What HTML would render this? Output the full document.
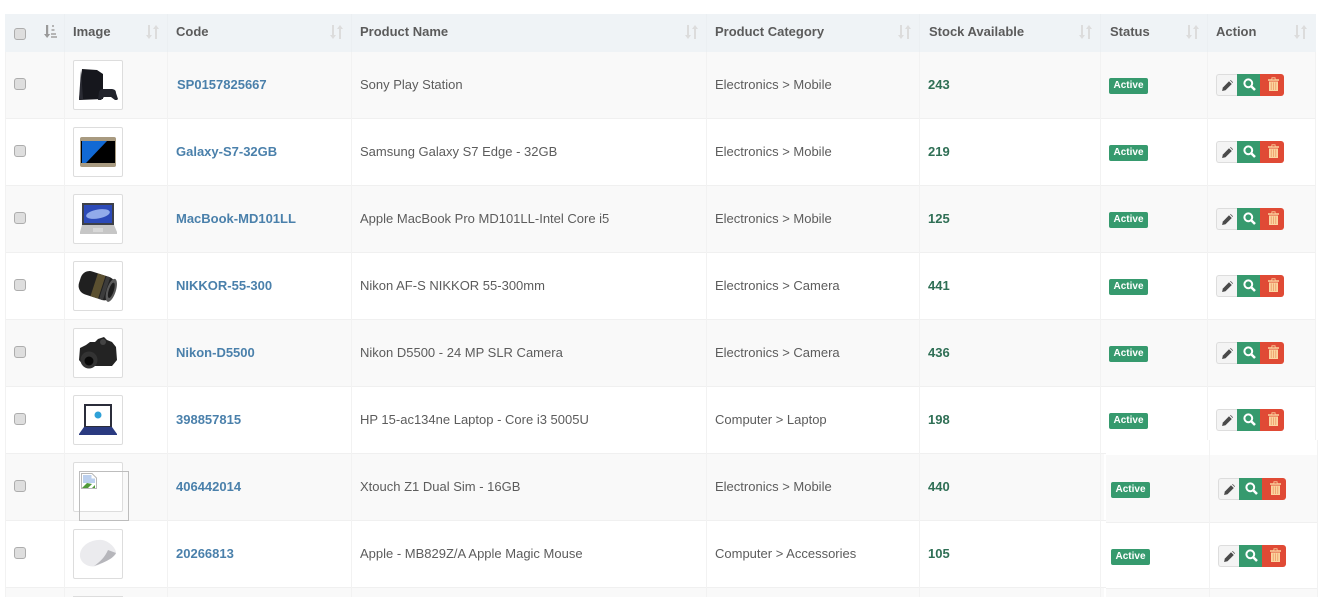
<!DOCTYPE html>
<html><head><meta charset="utf-8"><style>
html,body{margin:0;padding:0;background:#fff;width:1331px;height:597px;overflow:hidden}
body{position:relative;font:13px/22px "Liberation Sans",Arial,sans-serif;color:#555}
div,span,svg{position:absolute;display:block}
.head{left:5px;top:14px;width:1311px;height:38px;background:#eff3f6}
.st{left:5px;width:1311px;height:66px;background:#f9f9f9}
.hl{left:5px;width:1311px;height:1px;background:#f0f0f0}
.vl{top:52px;width:1px;height:545px;background:#f2f2f2}
.hv{top:14px;width:1px;height:38px;background:#ebeff2}
.h{top:21px;font-weight:700;color:#5b5b5b;white-space:nowrap}
.t{white-space:nowrap;color:#5c5c5c}
.c{font-weight:700;color:#4a80ab;white-space:nowrap}
.n{font-weight:700;color:#2f6f55;white-space:nowrap}
.cb{left:14px;width:10px;height:10px;border:1px solid #adadad;border-radius:3px;background:#dedede}
.th{left:73px;width:48px;height:48px;border:1px solid #ddd;border-radius:2px;background:#fff}
.b{width:39px;height:16px;background:#369a6e;border-radius:2px;color:#fff;font-size:10px;font-weight:700;line-height:16px;text-align:center}
.e{width:20px;height:20px;background:#f4f4f4;border:1px solid #ddd;border-right:0;border-radius:3px 0 0 3px}
.g{width:23px;height:22px;background:#369a6e}
.d{width:24px;height:22px;background:#e04a35;border-radius:0 3px 3px 0}
</style></head><body>
<svg width="0" height="0" style="left:0;top:0"><defs>
<symbol id="sort" viewBox="0 0 13 14"><path d="M2 0h2v10h2l-3 4-3-4h2zM9 14h2V4h2l-3-4-3 4h2z" fill="#dcdcdc"/></symbol>
<symbol id="pen" viewBox="0 0 11 11"><path d="M7 1.200l2.800 2.800-6.300 6.300-3.400.7.700-3.400z" fill="#4a4a4a"/><path d="M8 .4l.7-.4 2.300 2.300-.4.700z" fill="#555"/></symbol>
<symbol id="mag" viewBox="0 0 13 13"><circle cx="5.300" cy="5.300" r="3.900" fill="none" stroke="#fff" stroke-width="2"/><path d="M8.200 8.200l3.800 3.800" stroke="#fff" stroke-width="2.500"/></symbol>
<symbol id="tr" viewBox="0 0 11 14"><path d="M0 2.200h11v1.500H0zM3.500 2.400V.4h4v2" fill="#fbd5a0"/><path d="M4.300 1.200h2.400v1.200H4.300z" fill="#e04a35"/><path d="M1 4.500h9V14H1z" fill="#fbd5a0"/><path d="M3.200 5.400v7.600M5.500 5.400v7.600M7.800 5.400v7.600" stroke="#ec9360" stroke-width=".7"/></symbol>
</defs></svg>

<div class="head"></div>
<div class="st" style="top:52px"></div><div class="st" style="top:186px"></div><div class="st" style="top:320px"></div><div class="st" style="top:454px;width:1099px"></div><div class="st" style="top:588px;width:1099px;height:9px"></div>
<div class="hl" style="top:118px"></div><div class="hl" style="top:185px"></div><div class="hl" style="top:252px"></div><div class="hl" style="top:319px"></div><div class="hl" style="top:386px"></div><div class="hl" style="top:453px"></div><div class="hl" style="top:520px"></div><div class="hl" style="top:587px"></div>
<div class="vl" style="left:5px"></div><div class="vl" style="left:64px"></div><div class="vl" style="left:167px"></div><div class="vl" style="left:351px"></div><div class="vl" style="left:706px"></div><div class="vl" style="left:919px"></div><div class="vl" style="left:1100px"></div><div class="vl" style="left:1207px;height:388px"></div><div class="vl" style="left:1315px;height:388px"></div>
<div class="hv" style="left:64px"></div><div class="hv" style="left:167px"></div><div class="hv" style="left:351px"></div><div class="hv" style="left:706px"></div><div class="hv" style="left:919px"></div><div class="hv" style="left:1100px"></div><div class="hv" style="left:1207px"></div>

<div class="cb" style="top:28px"></div>
<svg style="left:44px;top:25px" width="13" height="13" viewBox="0 0 13 13"><path d="M2 0h2.200v9h2l-3.100 4L0 9h2z" fill="#9a9a9a"/><path d="M8 0h2v2H8zM7.500 4h3v2h-3zM7 8h5v2H7zM7 11h6v2H7z" fill="#b5b5b5"/></svg>
<div class="h" style="left:73px">Image</div><svg style="left:146px;top:25px" width="13" height="14"><use href="#sort"/></svg>
<div class="h" style="left:176px">Code</div><svg style="left:330px;top:25px" width="13" height="14"><use href="#sort"/></svg>
<div class="h" style="left:360px">Product Name</div><svg style="left:685px;top:25px" width="13" height="14"><use href="#sort"/></svg>
<div class="h" style="left:715px">Product Category</div><svg style="left:898px;top:25px" width="13" height="14"><use href="#sort"/></svg>
<div class="h" style="left:929px">Stock Available</div><svg style="left:1079px;top:25px" width="13" height="14"><use href="#sort"/></svg>
<div class="h" style="left:1110px">Status</div><svg style="left:1186px;top:25px" width="13" height="14"><use href="#sort"/></svg>
<div class="h" style="left:1216px">Action</div><svg style="left:1294px;top:25px" width="13" height="14"><use href="#sort"/></svg>

<div class="cb" style="top:78px"></div><div class="cb" style="top:145px"></div><div class="cb" style="top:212px"></div><div class="cb" style="top:279px"></div><div class="cb" style="top:346px"></div><div class="cb" style="top:413px"></div><div class="cb" style="top:480px"></div><div class="cb" style="top:547px"></div>

<div class="th" style="top:60px"><svg style="left:0;top:0" width="48" height="48" viewBox="0 0 48 48"><path d="M8 8l15 1 6 4v25L5 39z" fill="#16171d"/><path d="M7 9l2 29h-4z" fill="#2a2b33"/><path d="M25 31c1-3 3-3 5-3h7c3 0 5 1 5 4l2 6-1 1h-2l-4-3h-7l-3 3h-3z" fill="#22242c"/></svg></div>
<div class="th" style="top:127px"><svg style="left:0;top:0" width="48" height="48" viewBox="0 0 48 48"><rect x="6" y="9" width="36" height="30" rx="2" fill="#a89a80"/><rect x="7" y="13" width="34" height="22" fill="#000"/><path d="M8 13h25L12 35H8z" fill="#1169d4"/></svg></div>
<div class="th" style="top:194px"><svg style="left:0;top:0" width="48" height="48" viewBox="0 0 48 48"><path d="M8 8h32v22H8z" fill="#3d4048"/><path d="M10 10h28v18H10z" fill="#2c4ab8"/><ellipse cx="24" cy="19" rx="12" ry="4.500" fill="#92abea" transform="rotate(-10 24 19)"/><path d="M8 30h32l3 7v2H6v-2z" fill="#c6c6c6"/><path d="M19 33h10v4H19z" fill="#d8d8d8"/></svg></div>
<div class="th" style="top:261px"><svg style="left:0;top:0" width="48" height="48" viewBox="0 0 48 48"><g transform="rotate(18 24 24)"><rect x="5" y="12" width="36" height="24" rx="9" fill="#202020"/><rect x="20" y="12" width="8" height="24" fill="#5b5030"/><rect x="29" y="12" width="4" height="24" fill="#3c3c3c"/><ellipse cx="38" cy="24" rx="4.500" ry="12" fill="#5a5a5a"/><ellipse cx="38" cy="24" rx="2.500" ry="8" fill="#1d1d1d"/></g></svg></div>
<div class="th" style="top:328px"><svg style="left:0;top:0" width="48" height="48" viewBox="0 0 48 48"><path d="M6 19l6-3 4-3h5l3-3 6-2 3 3 5 2 4 5 1 13-5 6H10l-5-6z" fill="#232323"/><circle cx="29" cy="13" r="3" fill="#444"/><circle cx="15" cy="31" r="8.500" fill="#333"/><circle cx="15" cy="32" r="4.500" fill="#090909"/></svg></div>
<div class="th" style="top:395px"><svg style="left:0;top:0" width="48" height="48" viewBox="0 0 48 48"><rect x="10" y="8" width="28" height="23" fill="#2b2d3a"/><rect x="12" y="10" width="24" height="20" fill="#fff"/><circle cx="24" cy="19" r="3.500" fill="#2ea1d8"/><path d="M10 31h28l5 7v1H5v-1z" fill="#2a3a80"/></svg></div>
<div class="th" style="top:462px"></div>
<svg style="left:81px;top:473px" width="16" height="16" viewBox="0 0 16 16"><path d="M.5.5H11l4.500 4.500v10.500H.5z" fill="#fff" stroke="#b8b8b8"/><path d="M2 2h8.500v3.500H14V10H2z" fill="#bcd0ee"/><path d="M1 15l5-5 5 1-4 4z" fill="#4f9a3a"/><path d="M11 15l3-3v3z" fill="#4f9a3a"/></svg>
<div style="left:79px;top:471px;width:48px;height:48px;border:1px solid #bdbdbd"></div>
<div class="th" style="top:529px"><svg style="left:0;top:0" width="48" height="48" viewBox="0 0 48 48"><path d="M6 24c1-9 12-15 22-14 7 1 14 8 14 13 0 4-13 10-20 13-7 2-17-3-16-12z" fill="#ebebee"/><path d="M20 36c9-3 19-7 22-13l-8-3c-3 7-8 12-14 16z" fill="#b6b6bb"/></svg></div>

<div class="c" style="left:177px;top:74px">SP0157825667</div>
<div class="c" style="left:176px;top:141px">Galaxy-S7-32GB</div>
<div class="c" style="left:176px;top:208px">MacBook-MD101LL</div>
<div class="c" style="left:176px;top:275px">NIKKOR-55-300</div>
<div class="c" style="left:176px;top:342px">Nikon-D5500</div>
<div class="c" style="left:176px;top:409px">398857815</div>
<div class="c" style="left:176px;top:476px">406442014</div>
<div class="c" style="left:176px;top:543px">20266813</div>

<div class="t" style="left:360px;top:74px">Sony Play Station</div>
<div class="t" style="left:360px;top:141px">Samsung Galaxy S7 Edge - 32GB</div>
<div class="t" style="left:360px;top:208px">Apple MacBook Pro MD101LL-Intel Core i5</div>
<div class="t" style="left:360px;top:275px">Nikon AF-S NIKKOR 55-300mm</div>
<div class="t" style="left:360px;top:342px">Nikon D5500 - 24 MP SLR Camera</div>
<div class="t" style="left:360px;top:409px">HP 15-ac134ne Laptop - Core i3 5005U</div>
<div class="t" style="left:360px;top:476px">Xtouch Z1 Dual Sim - 16GB</div>
<div class="t" style="left:360px;top:543px">Apple - MB829Z/A Apple Magic Mouse</div>

<div class="t" style="left:715px;top:74px">Electronics &gt; Mobile</div>
<div class="t" style="left:715px;top:141px">Electronics &gt; Mobile</div>
<div class="t" style="left:715px;top:208px">Electronics &gt; Mobile</div>
<div class="t" style="left:715px;top:275px">Electronics &gt; Camera</div>
<div class="t" style="left:715px;top:342px">Electronics &gt; Camera</div>
<div class="t" style="left:715px;top:409px">Computer &gt; Laptop</div>
<div class="t" style="left:715px;top:476px">Electronics &gt; Mobile</div>
<div class="t" style="left:715px;top:543px">Computer &gt; Accessories</div>

<div class="n" style="left:928px;top:74px">243</div>
<div class="n" style="left:928px;top:141px">219</div>
<div class="n" style="left:928px;top:208px">125</div>
<div class="n" style="left:928px;top:275px">441</div>
<div class="n" style="left:928px;top:342px">436</div>
<div class="n" style="left:928px;top:409px">198</div>
<div class="n" style="left:928px;top:476px">440</div>
<div class="n" style="left:928px;top:543px">105</div>

<div class="b" style="left:1109px;top:78px">Active</div>
<div class="b" style="left:1109px;top:145px">Active</div>
<div class="b" style="left:1109px;top:212px">Active</div>
<div class="b" style="left:1109px;top:279px">Active</div>
<div class="b" style="left:1109px;top:346px">Active</div>
<div class="b" style="left:1109px;top:413px">Active</div>

<div class="e" style="left:1216px;top:74px"></div><div class="g" style="left:1237px;top:74px"></div><div class="d" style="left:1260px;top:74px"></div><svg style="left:1222px;top:80px" width="11" height="11"><use href="#pen"/></svg><svg style="left:1243px;top:78px" width="13" height="13"><use href="#mag"/></svg><svg style="left:1268px;top:77px" width="11" height="14"><use href="#tr"/></svg>
<div class="e" style="left:1216px;top:141px"></div><div class="g" style="left:1237px;top:141px"></div><div class="d" style="left:1260px;top:141px"></div><svg style="left:1222px;top:147px" width="11" height="11"><use href="#pen"/></svg><svg style="left:1243px;top:145px" width="13" height="13"><use href="#mag"/></svg><svg style="left:1268px;top:144px" width="11" height="14"><use href="#tr"/></svg>
<div class="e" style="left:1216px;top:208px"></div><div class="g" style="left:1237px;top:208px"></div><div class="d" style="left:1260px;top:208px"></div><svg style="left:1222px;top:214px" width="11" height="11"><use href="#pen"/></svg><svg style="left:1243px;top:212px" width="13" height="13"><use href="#mag"/></svg><svg style="left:1268px;top:211px" width="11" height="14"><use href="#tr"/></svg>
<div class="e" style="left:1216px;top:275px"></div><div class="g" style="left:1237px;top:275px"></div><div class="d" style="left:1260px;top:275px"></div><svg style="left:1222px;top:281px" width="11" height="11"><use href="#pen"/></svg><svg style="left:1243px;top:279px" width="13" height="13"><use href="#mag"/></svg><svg style="left:1268px;top:278px" width="11" height="14"><use href="#tr"/></svg>
<div class="e" style="left:1216px;top:342px"></div><div class="g" style="left:1237px;top:342px"></div><div class="d" style="left:1260px;top:342px"></div><svg style="left:1222px;top:348px" width="11" height="11"><use href="#pen"/></svg><svg style="left:1243px;top:346px" width="13" height="13"><use href="#mag"/></svg><svg style="left:1268px;top:345px" width="11" height="14"><use href="#tr"/></svg>
<div class="e" style="left:1216px;top:409px"></div><div class="g" style="left:1237px;top:409px"></div><div class="d" style="left:1260px;top:409px"></div><svg style="left:1222px;top:415px" width="11" height="11"><use href="#pen"/></svg><svg style="left:1243px;top:413px" width="13" height="13"><use href="#mag"/></svg><svg style="left:1268px;top:412px" width="11" height="14"><use href="#tr"/></svg>

<div style="left:1106px;top:440px;width:211px;height:157px;background:#fff"></div>
<div style="left:1106px;top:455px;width:211px;height:67px;background:#f9f9f9"></div>
<div style="left:1106px;top:589px;width:211px;height:8px;background:#f9f9f9"></div>
<div style="left:1106px;top:522px;width:211px;height:1px;background:#f0f0f0"></div>
<div style="left:1106px;top:588px;width:211px;height:1px;background:#f0f0f0"></div>
<div style="left:1209px;top:440px;width:1px;height:157px;background:#f2f2f2"></div>
<div style="left:1317px;top:440px;width:1px;height:157px;background:#f2f2f2"></div>
<div class="b" style="left:1111px;top:482px">Active</div>
<div class="b" style="left:1111px;top:549px">Active</div>
<div class="e" style="left:1218px;top:478px"></div><div class="g" style="left:1239px;top:478px"></div><div class="d" style="left:1262px;top:478px"></div><svg style="left:1224px;top:484px" width="11" height="11"><use href="#pen"/></svg><svg style="left:1245px;top:482px" width="13" height="13"><use href="#mag"/></svg><svg style="left:1270px;top:481px" width="11" height="14"><use href="#tr"/></svg>
<div class="e" style="left:1218px;top:545px"></div><div class="g" style="left:1239px;top:545px"></div><div class="d" style="left:1262px;top:545px"></div><svg style="left:1224px;top:551px" width="11" height="11"><use href="#pen"/></svg><svg style="left:1245px;top:549px" width="13" height="13"><use href="#mag"/></svg><svg style="left:1270px;top:548px" width="11" height="14"><use href="#tr"/></svg>

<div style="left:73px;top:596px;width:50px;height:1px;background:#ddd"></div>
</body></html>
